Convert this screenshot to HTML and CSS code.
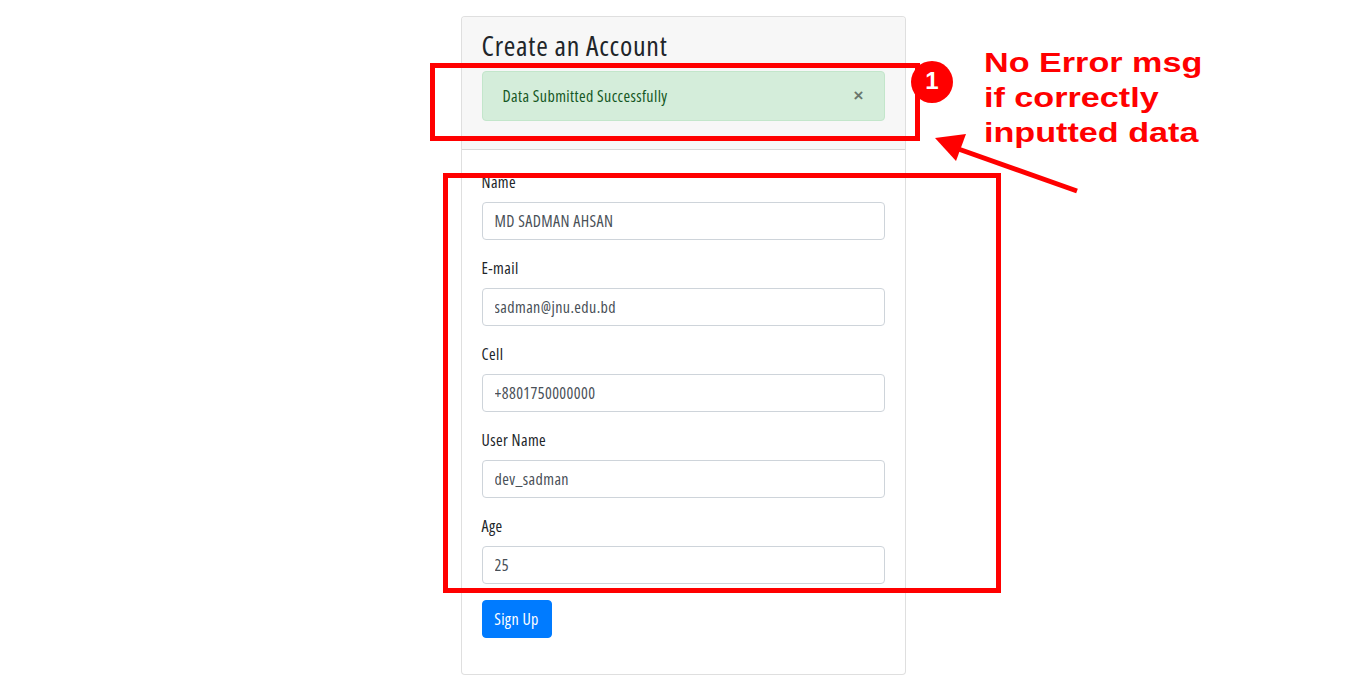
FILE: index.html
```html
<!DOCTYPE html>
<html lang="en">
<head>
<meta charset="utf-8">
<title>Create an Account</title>
<link rel="stylesheet" href="styles.css">
</head>
<body>
<div class="page">
  <div class="card">
    <div class="card-header">
      <h3 class="title">Create an Account</h3>
      <div class="alert">
        Data Submitted Successfully
        <button class="close" type="button">&times;</button>
      </div>
    </div>
    <form class="card-body">
      <div class="form-group">
        <label class="label">Name</label>
        <input class="input" type="text" value="MD SADMAN AHSAN">
      </div>
      <div class="form-group">
        <label class="label">E-mail</label>
        <input class="input" type="text" value="sadman@jnu.edu.bd">
      </div>
      <div class="form-group">
        <label class="label">Cell</label>
        <input class="input" type="text" value="+8801750000000">
      </div>
      <div class="form-group">
        <label class="label">User Name</label>
        <input class="input" type="text" value="dev_sadman">
      </div>
      <div class="form-group">
        <label class="label">Age</label>
        <input class="input" type="text" value="25">
      </div>
      <div class="form-group">
        <button class="btn" type="button">Sign Up</button>
      </div>
    </form>
  </div>

  <div class="mark mark-alert"></div>
  <div class="mark mark-form"></div>
  <div class="badge">1</div>
  <div class="note">No Error msg<br>if correctly<br>inputted data</div>
  <svg class="arrow" width="170" height="75" viewBox="0 0 170 75">
    <line x1="157" y1="61" x2="30" y2="16" stroke="#ff0000" stroke-width="5"/>
    <polygon points="15,8 46,4 36,31" fill="#ff0000"/>
  </svg>
</div>
</body>
</html>
```

FILE: styles.css
```css
* { box-sizing: border-box; }
html, body { margin: 0; padding: 0; }
body {
  background: #fff;
  font-family: "Open Sans", "Noto Sans", sans-serif;
  font-stretch: 75%;
  font-size: 16px;
  letter-spacing: 0.4px;
  line-height: 1.5;
  color: #212529;
  overflow: hidden;
}
.page {
  position: relative;
  height: 675px;
  padding-top: 16px;
}
.card {
  width: 445px;
  margin: 0 auto;
  border: 1px solid rgba(0,0,0,.125);
  border-radius: 4px;
  background: #fff;
}
.card-header {
  background: #f7f7f7;
  border-bottom: 1px solid rgba(0,0,0,.125);
  padding: 12px 20px;
  border-radius: 3px 3px 0 0;
}
.title {
  margin: 0 0 8px;
  font-size: 28px;
  font-weight: 400;
  letter-spacing: 0.75px;
  line-height: 33.6px;
  color: #212529;
}
.alert {
  position: relative;
  padding: 12px 20px;
  margin-bottom: 16px;
  border: 1px solid #c3e6cb;
  border-radius: 4px;
  background: #d4edda;
  color: #155724;
  line-height: 24px;
}
.close {
  position: absolute;
  top: 0;
  right: 0;
  padding: 12px 20px;
  border: 0;
  background: transparent;
  font-family: "Liberation Sans", sans-serif;
  font-stretch: normal;
  letter-spacing: 0;
  font-size: 17px;
  font-weight: 700;
  line-height: 24px;
  color: #000;
  opacity: .5;
}
.card-body {
  display: block;
  padding: 20px;
  margin: 0;
}
.form-group { margin-bottom: 16px; }
.label {
  display: inline-block;
  margin-bottom: 8px;
  line-height: 24px;
}
.input {
  display: block;
  width: 100%;
  height: 38px;
  padding: 6px 12px;
  font-family: inherit;
  font-stretch: 75%;
  font-size: 16px;
  letter-spacing: 0.4px;
  line-height: 24px;
  color: #495057;
  background: #fff;
  border: 1px solid #ced4da;
  border-radius: 4px;
}
.btn {
  display: inline-block;
  height: 38px;
  width: 70px;
  padding: 6px 0;
  font-family: inherit;
  font-stretch: 75%;
  font-size: 16px;
  letter-spacing: 0.4px;
  line-height: 24px;
  color: #fff;
  background: #007bff;
  border: 1px solid #007bff;
  border-radius: 4px;
}

/* annotations */
.mark {
  position: absolute;
  border: 5px solid #ff0000;
}
.mark-alert { left: 430px; top: 63px; width: 490px; height: 78px; }
.mark-form { left: 443px; top: 173px; width: 558px; height: 420px; }
.badge {
  position: absolute;
  left: 911px;
  top: 61px;
  width: 42px;
  height: 42px;
  border-radius: 50%;
  background: #ff0000;
  color: #fff;
  font-family: "Liberation Sans", sans-serif;
  font-stretch: normal;
  letter-spacing: 0;
  font-size: 24px;
  font-weight: 700;
  line-height: 40px;
  text-align: center;
}
.note {
  position: absolute;
  left: 984px;
  top: 45px;
  font-family: "Liberation Sans", sans-serif;
  font-stretch: normal;
  letter-spacing: 0;
  font-weight: 700;
  font-size: 28px;
  line-height: 35px;
  color: #ff0000;
  white-space: nowrap;
  transform: scaleX(1.22);
  transform-origin: left top;
}
.arrow {
  position: absolute;
  left: 920px;
  top: 130px;
}
```
